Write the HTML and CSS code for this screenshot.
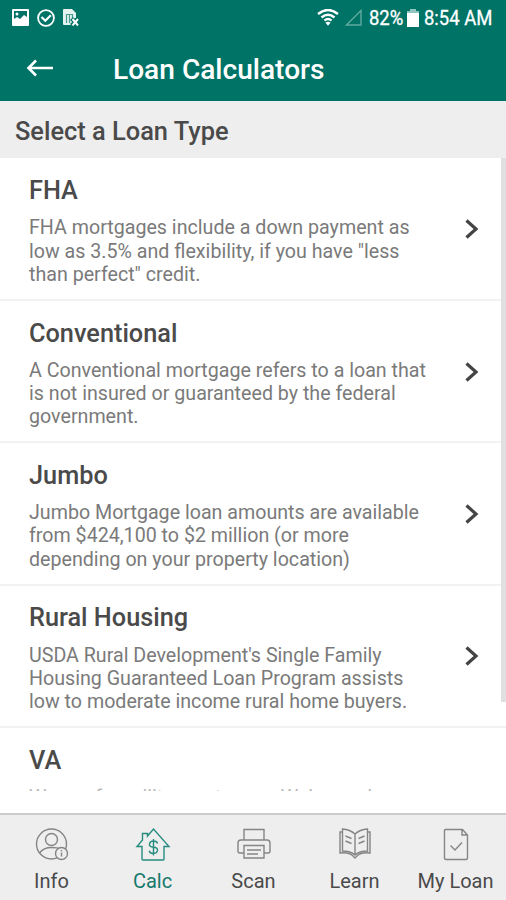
FILE: index.html
```html
<!DOCTYPE html>
<html lang="en">
<head>
    <meta charset="UTF-8">
    <meta name="viewport" content="width=device-width, initial-scale=1.0">
    <title>Loan Calculators</title>
    <link rel="stylesheet" href="styles.css">
</head>
<body>
    <div class="status-bar">
        <div class="status-left">
            <svg width="17" height="17" viewBox="0 0 17 17">
                <path fill="#fff" fill-rule="evenodd" d="M1 0h15q1 0 1 1v15q0 1-1 1H1q-1 0-1-1V1q0-1 1-1zM2 2v8l3-2 3 2 4-4 3 2V2zM5 3.500a1.500 1.500 0 1 1 0 3a1.500 1.500 0 0 1 0-3z"/>
            </svg>
            <svg width="18" height="18" viewBox="0 0 18 18" fill="none" stroke="#fff">
                <circle cx="9" cy="9" r="7.900" stroke-width="1.800"/>
                <path d="M4.500 8l3.800 3.800 5.500-5.600" stroke-width="2.200"/>
            </svg>
            <svg width="16" height="17" viewBox="0 0 16 17">
                <path fill="#e4f3f0" d="M1 0h8l4 4v5L9 10v6H1q-1 0-1-1V1q0-1 1-1z"/>
                <path d="M3.500 14V5.500h6V9M6.500 6v8" fill="none" stroke="#4c9b92" stroke-width="1.200"/>
                <path d="M8.500 9.500l7 7M15.500 9.500l-7 7" stroke="#007367" stroke-width="4"/>
                <path d="M9.500 10l5.500 6.500M15 10l-5.500 6.500" stroke="#fff" stroke-width="2"/>
            </svg>
        </div>
        <div class="status-right">
            <svg class="wifi" width="22" height="17" viewBox="0 0 22 17" fill="none" stroke="#fff" stroke-width="2.400">
                <path d="M1 5Q11-3 21 5M4.500 8.500Q11 3 17.500 8.500M7.500 11.700Q11 8.500 14.500 11.700"/>
                <path d="M8.500 13.700Q11 12 13.500 13.700L11 16.800z" fill="#fff" stroke="none"/>
            </svg>
            <svg class="signal" width="17" height="17" viewBox="0 0 17 17">
                <path d="M1.500 16L16 1.500V16z" fill="none" stroke="#5fa9a0" stroke-width="1.400"/>
            </svg>
            <span class="percent">82%</span>
            <svg class="battery" width="12" height="18" viewBox="0 0 12 18">
                <path fill="#8fc5be" d="M3 0h6v2h3v3H0V2h3z"/>
                <path fill="#fff" d="M0 4h12v14H0z"/>
            </svg>
            <span class="time">8:54 AM</span>
        </div>
    </div>

    <header class="app-bar">
        <svg class="back" width="28" height="18" viewBox="0 0 28 18" fill="none" stroke="#fff" stroke-width="2.600">
            <path d="M2.500 9H27M10 1.500L2.500 9l7.500 7.500"/>
        </svg>
        <h1>Loan Calculators</h1>
    </header>

    <h2 class="section-title">Select a Loan Type</h2>

    <main class="loan-list">
        <div class="loan">
            <div class="loan-text">
                <h3>FHA</h3>
                <p>FHA mortgages include a down payment as<br>low as 3.5% and flexibility, if you have "less<br>than perfect" credit.</p>
            </div>
            <svg class="chevron" width="14" height="20" viewBox="0 0 14 20"><path d="M1.500 1.500L11 10l-9.500 8.500"/></svg>
        </div>
        <div class="loan">
            <div class="loan-text">
                <h3>Conventional</h3>
                <p>A Conventional mortgage refers to a loan that<br>is not insured or guaranteed by the federal<br>government.</p>
            </div>
            <svg class="chevron" width="14" height="20" viewBox="0 0 14 20"><path d="M1.500 1.500L11 10l-9.500 8.500"/></svg>
        </div>
        <div class="loan">
            <div class="loan-text">
                <h3>Jumbo</h3>
                <p>Jumbo Mortgage loan amounts are available<br>from $424,100 to $2 million (or more<br>depending on your property location)</p>
            </div>
            <svg class="chevron" width="14" height="20" viewBox="0 0 14 20"><path d="M1.500 1.500L11 10l-9.500 8.500"/></svg>
        </div>
        <div class="loan">
            <div class="loan-text">
                <h3>Rural Housing</h3>
                <p>USDA Rural Development's Single Family<br>Housing Guaranteed Loan Program assists<br>low to moderate income rural home buyers.</p>
            </div>
            <svg class="chevron" width="14" height="20" viewBox="0 0 14 20"><path d="M1.500 1.500L11 10l-9.500 8.500"/></svg>
        </div>
        <div class="loan">
            <div class="loan-text">
                <h3>VA</h3>
                <p class="cut">We are for military veterans. Welcome home</p>
            </div>
        </div>
        <div class="scrollbar"></div>
    </main>

    <nav class="tab-bar">
        <a class="tab">
            <svg width="36" height="36" viewBox="0 0 36 36">
                <circle cx="17.500" cy="17" r="15"/>
                <circle cx="17.500" cy="12.500" r="6"/>
                <path d="M5.500 26q4-5.500 12-5.500 6 0 9 1.500"/>
                <circle class="mask" cx="27.500" cy="26.500" r="6"/>
                <path d="M27.500 25.500v4M27.500 23v1.300"/>
            </svg>
            <span>Info</span>
        </a>
        <a class="tab active">
            <svg width="36" height="36" viewBox="0 0 36 36">
                <path d="M7 19.500H2L7.500 13V6.500h5V9L18.500 2 34 19.500h-5V32q0 1-1 1H8q-1 0-1-1z"/>
                <path d="M22.500 16.500q-.5-2.500-4-2.500t-4 3 4 3.300 4 3.200-4 3-4.300-2.700M18.500 12V28.500"/>
            </svg>
            <span>Calc</span>
        </a>
        <a class="tab">
            <svg width="36" height="36" viewBox="0 0 36 36">
                <path d="M8 13V2.500h20V13M8 26H4q-2 0-2-2v-8q0-3 3-3h26q3 0 3 3v8q0 2-2 2h-4"/>
                <path d="M8 18.500h20V31H8zM11 23h14M11 27h11"/>
            </svg>
            <span>Scan</span>
        </a>
        <a class="tab">
            <svg width="36" height="36" viewBox="0 0 36 36">
                <path d="M18 7Q13 2.500 5.500 2v22q8 0 12.500 4 4.500-4 12.500-4V2Q23 2.500 18 7zV28"/>
                <path d="M5 5H3v21q9-1 12.500 2.500L18 31l2.500-2.500Q24 25 33 26V5H31"/>
                <path d="M8.500 9l6 2.500M8.500 14l6 2.500M27.500 9l-6 2.500M27.500 14l-6 2.500"/>
            </svg>
            <span>Learn</span>
        </a>
        <a class="tab">
            <svg width="36" height="36" viewBox="0 0 36 36">
                <path d="M7.500 2.500h17L29.500 8v23q0 1.500-1.500 1.500H8q-1.500 0-1.500-1.500V3.500q0-1 1-1zM24 2.500V8h5.500"/>
                <path d="M12.500 18.500l4.500 4.500 7-7.500"/>
            </svg>
            <span>My Loan</span>
        </a>
    </nav>
</body>
</html>
```
FILE: styles.css
```css
* {
    box-sizing: border-box;
}
body {
    font-family: Roboto, Arial, sans-serif;
    background-color: #fff;
    color: #4a4a4a;
    margin: 0;
    width: 506px;
    height: 900px;
    display: flex;
    flex-direction: column;
    overflow: hidden;
}
h1, h2, h3, p {
    margin: 0;
}
.status-bar {
    height: 36px;
    flex: none;
    background: #007367;
    color: #fff;
    display: flex;
    justify-content: space-between;
    align-items: center;
    padding: 0 13px 0 12px;
}
.status-left, .status-right {
    display: flex;
    align-items: center;
}
.status-left {
    gap: 8px;
    padding-bottom: 1px;
}
.status-right {
    font-size: 20.500px;
    white-space: nowrap;
    -webkit-text-stroke: 0.3px #fff;
}
.wifi, .signal {
    margin-bottom: 1px;
}
.signal {
    margin-left: 6px;
    margin-right: 7px;
}
/* narrow status text */
.percent, .time {
    display: block;
    transform: scaleX(0.9);
    transform-origin: left;
}
.percent {
    width: 34px;
}
.time {
    width: 69px;
}
.battery {
    margin: 0 5px 1px 4px;
}
.app-bar {
    height: 65px;
    flex: none;
    background: #007367;
    color: #fff;
    display: flex;
    align-items: center;
    padding: 0 0 1px 26px;
}
.app-bar h1 {
    font-size: 28.100px;
    font-weight: 500;
    margin-left: 59px;
    padding-top: 2px;
}
.section-title {
    height: 57px;
    flex: none;
    background: #eee;
    font-size: 25.400px;
    font-weight: 500;
    line-height: 60px;
    padding-left: 15px;
}
.loan-list {
    position: relative;
    height: 655px;
    flex: none;
    overflow: hidden;
}
.loan {
    height: 142.400px;
    border-bottom: 2px solid #f2f2f2;
    display: flex;
    justify-content: space-between;
    align-items: center;
    padding: 1px 27px 0 29px;
}
.loan:first-child {
    height: 143px;
}
.loan-text {
    align-self: flex-start;
    padding-top: 16px;
}
.loan:not(:first-child) .loan-text {
    padding-top: 15.500px;
}
.loan h3 {
    font-size: 25.300px;
    font-weight: 500;
    line-height: 32px;
}
.loan p {
    font-size: 19.650px;
    line-height: 23.200px;
    margin-top: 9.400px;
    color: #7a7a7a;
    white-space: nowrap;
}
.loan .cut {
    height: 5px;
    overflow: hidden;
    color: #b8b8b8;
    word-spacing: 0.600px;
}
.chevron {
    fill: none;
    stroke: #444;
    stroke-width: 3.200;
}
.scrollbar {
    position: absolute;
    top: 0;
    right: 0;
    width: 5px;
    height: 544px;
    background: #e0e0e0;
}
.tab-bar {
    flex: 1;
    background: #eee;
    border-top: 2px solid #ccc;
    display: grid;
    grid-template-columns: repeat(5, 1fr);
    padding-left: 1px;
}
.tab {
    display: flex;
    flex-direction: column;
    align-items: center;
    padding-top: 12px;
    font-size: 20px;
    line-height: 24px;
    gap: 6px;
}
.tab svg {
    fill: none;
    stroke: #858585;
    stroke-width: 1.400;
}
.tab .mask {
    fill: #eee;
}
.tab.active {
    color: #16796d;
}
.tab.active svg {
    stroke: #268c80;
}
```
